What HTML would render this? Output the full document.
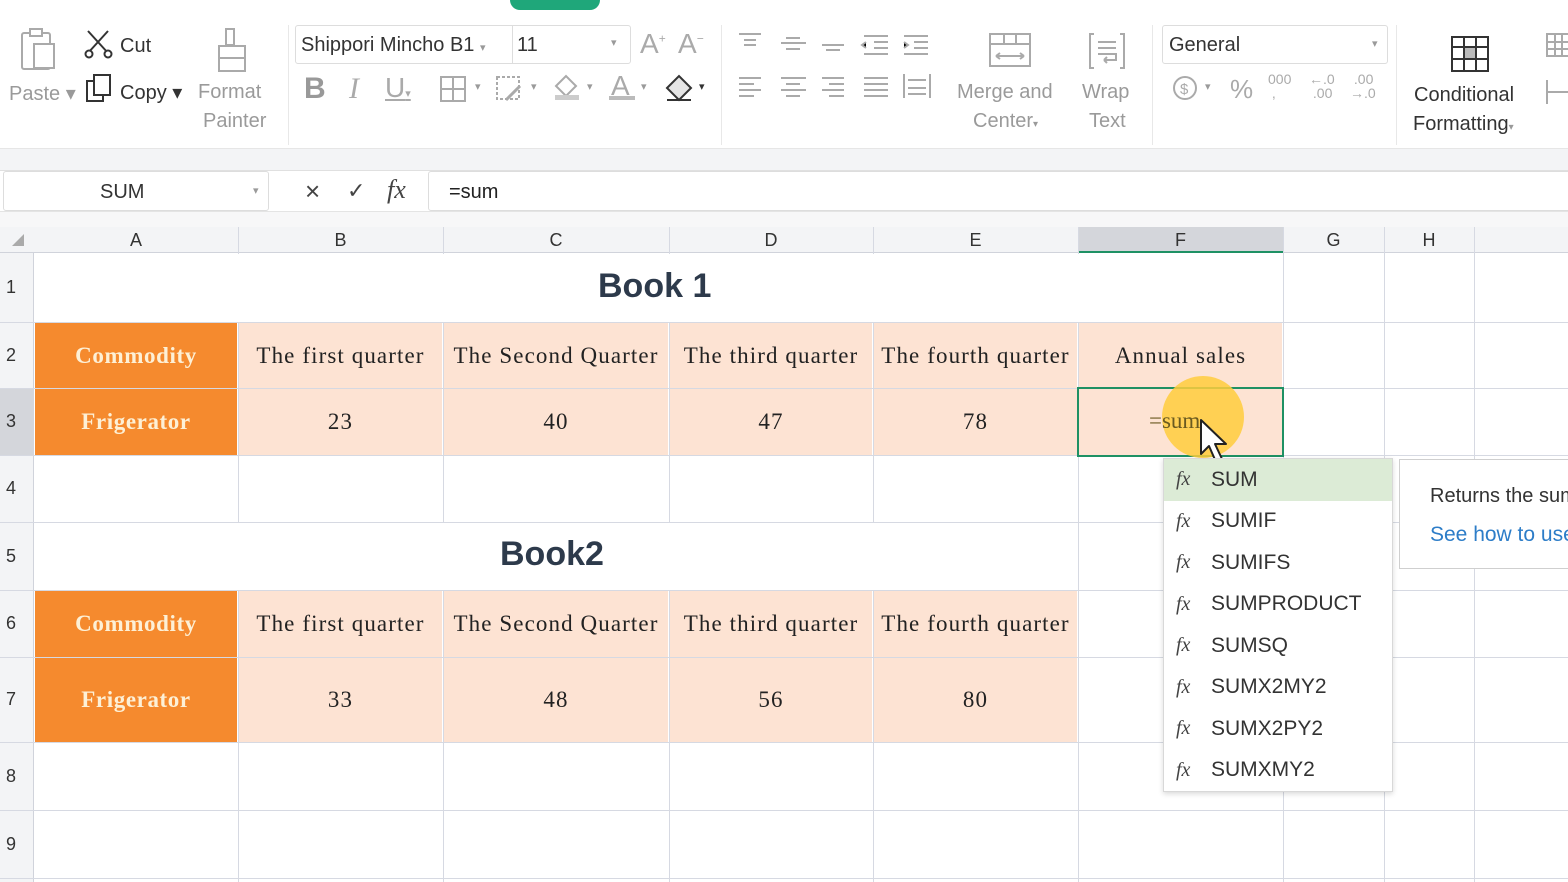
<!DOCTYPE html>
<html><head><meta charset="utf-8"><style>
*{margin:0;padding:0;box-sizing:border-box}
body{width:1568px;height:882px;overflow:hidden;background:#fff;font-family:"Liberation Sans",sans-serif;position:relative;color:#333}
.a{position:absolute}
.t{position:absolute;white-space:nowrap;color:#9a9a9a;font-size:20px}
.ser{font-family:"Liberation Serif",serif}
.cell{position:absolute;display:flex;align-items:center;justify-content:center;font-family:"Liberation Serif",serif;font-size:23px;letter-spacing:1.1px;color:#222;white-space:nowrap}
.or{background:#f58a2e;color:#fdf0d6;font-weight:bold;letter-spacing:0.6px}
.pe{background:#fde3d3}
.vl{position:absolute;width:1px;background:#d6d9e2}
.hl{position:absolute;height:1px;background:#d6d9e2}
.ch{position:absolute;top:227px;height:26px;font-size:18px;color:#333;display:flex;align-items:center;justify-content:center}
.rh{position:absolute;left:0;width:34px;font-size:18px;color:#333;padding-left:6px;display:flex;align-items:center}
.dd{position:absolute;left:1164px;width:228px;height:41.5px;display:flex;align-items:center;font-size:21px;color:#333}
.dd i{font-family:"Liberation Serif",serif;font-style:italic;font-size:20px;width:47px;padding-left:12px;color:#444}
</style></head><body>
<div class="a" style="left:510px;top:-12px;width:90px;height:22px;background:#1fa77a;border-radius:10px"></div>
<!-- ribbon -->
<div class="a" style="left:0;top:148px;width:1568px;height:22px;background:#f3f4f6;border-top:1px solid #e6e6e6"></div>
<svg class="a" style="left:20px;top:28px" width="44" height="44"><rect x="2" y="5" width="28" height="36" rx="2" fill="none" stroke="#aaa" stroke-width="2"/><rect x="10" y="1" width="12" height="7" fill="#fff" stroke="#aaa" stroke-width="2"/><rect x="14" y="16" width="20" height="24" fill="#fff" stroke="#aaa" stroke-width="2"/></svg>
<div class="t" style="left:9px;top:81px">Paste ▾</div>
<svg class="a" style="left:84px;top:29px" width="32" height="30"><path d="M4 2 L24 24 M24 2 L4 24" stroke="#333" stroke-width="2"/><circle cx="5" cy="25" r="3.5" fill="#fff" stroke="#333" stroke-width="2"/><circle cx="24" cy="25" r="3.5" fill="#fff" stroke="#333" stroke-width="2"/></svg>
<div class="t" style="left:120px;top:35px;color:#333">Cut</div>
<svg class="a" style="left:86px;top:74px" width="28" height="30"><rect x="1" y="7" width="16" height="20" fill="#fff" stroke="#333" stroke-width="2"/><rect x="8" y="1" width="16" height="20" fill="#fff" stroke="#333" stroke-width="2"/></svg>
<div class="t" style="left:120px;top:80px;color:#333">Copy ▾</div>
<svg class="a" style="left:215px;top:28px" width="36" height="46"><rect x="11" y="1" width="8" height="16" fill="none" stroke="#aaa" stroke-width="2"/><path d="M4 18 H30 V43 H4Z M4 30 H30" fill="none" stroke="#aaa" stroke-width="2"/></svg>
<div class="t" style="left:198px;top:81px">Format</div>
<div class="t" style="left:203px;top:110px">Painter</div>
<div class="a" style="left:288px;top:25px;width:1px;height:120px;background:#e8e8e8"></div>
<div class="a" style="left:295px;top:25px;width:336px;height:39px;border:1px solid #ddd;border-radius:3px"></div>
<div class="a" style="left:512px;top:25px;width:1px;height:39px;background:#ddd"></div>
<div class="t" style="left:301px;top:34px;color:#333">Shippori Mincho B1 <span style="font-size:11px;color:#999">▾</span></div>
<div class="t" style="left:517px;top:34px;color:#333">11</div>
<div class="t" style="left:611px;top:36px;font-size:11px">▾</div>
<div class="t" style="left:640px;top:28px;font-size:28px;color:#aaa">A<sup style="font-size:12px">+</sup></div>
<div class="t" style="left:678px;top:28px;font-size:28px;color:#aaa">A<sup style="font-size:12px">−</sup></div>
<div class="t" style="left:304px;top:72px;font-size:30px;font-weight:bold;color:#999">B</div>
<div class="t ser" style="left:349px;top:72px;font-size:30px;font-style:italic;color:#aaa">I</div>
<div class="t" style="left:385px;top:72px;font-size:28px;text-decoration:underline;color:#aaa">U<span style="font-size:11px">▾</span></div>
<svg class="a" style="left:440px;top:76px" width="30" height="26"><rect x="1" y="1" width="24" height="24" fill="none" stroke="#aaa" stroke-width="2"/><path d="M13 1V25M1 13H25" stroke="#aaa" stroke-width="2"/></svg>
<div class="t" style="left:475px;top:80px;font-size:11px">▾</div>
<svg class="a" style="left:496px;top:76px" width="30" height="26"><rect x="1" y="1" width="22" height="22" fill="none" stroke="#aaa" stroke-width="2" stroke-dasharray="3 2"/><path d="M10 24L24 10" stroke="#aaa" stroke-width="3"/></svg>
<div class="t" style="left:531px;top:80px;font-size:11px">▾</div>
<svg class="a" style="left:552px;top:72px" width="30" height="30"><path d="M4 14L14 4L24 14L14 24Z" fill="none" stroke="#aaa" stroke-width="2"/><rect x="3" y="23" width="24" height="5" fill="#ccc"/></svg>
<div class="t" style="left:587px;top:80px;font-size:11px">▾</div>
<div class="t" style="left:611px;top:70px;font-size:28px;color:#aaa">A</div>
<div class="a" style="left:609px;top:96px;width:26px;height:4px;background:#bbb"></div>
<div class="t" style="left:641px;top:80px;font-size:11px">▾</div>
<svg class="a" style="left:663px;top:72px" width="34" height="30"><path d="M4 16L16 4L28 16L16 28Z" fill="#e5e5e5" stroke="#333" stroke-width="2"/><path d="M4 28H28" stroke="#333" stroke-width="2"/></svg>
<div class="t" style="left:699px;top:80px;font-size:11px;color:#333">▾</div>
<div class="a" style="left:721px;top:25px;width:1px;height:120px;background:#e8e8e8"></div>
<svg class="a" style="left:736px;top:28px" width="200" height="80" stroke="#aaa" stroke-width="2"><path d="M3 6H25M8 12H20M8 17H20"/><path d="M45 15H70M50 10H64M50 21H64"/><path d="M86 17H108M90 22H104"/><path d="M128 8H152M138 14H152M138 20H152M128 26H152M130 14L126 17L130 20"/><path d="M168 8H192M178 14H192M178 20H192M168 26H192M168 14L172 17L168 20"/>
<path d="M3 50H25M3 56H18M3 62H25M3 68H18"/><path d="M45 50H70M50 56H64M45 62H70M50 68H64"/><path d="M86 50H108M93 56H108M86 62H108M93 68H108"/><path d="M128 50H152M128 56H152M128 62H152M128 68H152"/><path d="M168 46V70M194 46V70M172 52H190M172 60H190M172 66H190"/></svg>
<svg class="a" style="left:988px;top:32px" width="46" height="36"><rect x="2" y="2" width="40" height="32" fill="none" stroke="#aaa" stroke-width="2"/><path d="M2 12H42M16 2V12M28 2V12M8 24H36M8 24l4-3M8 24l4 3M36 24l-4-3M36 24l-4 3" stroke="#aaa" stroke-width="2" fill="none"/></svg>
<div class="t" style="left:957px;top:81px">Merge and</div>
<div class="t" style="left:973px;top:110px">Center<span style="font-size:10px">▾</span></div>
<svg class="a" style="left:1088px;top:32px" width="40" height="38" stroke="#aaa" stroke-width="2" fill="none"><path d="M6 2H2V36H6M32 2H36V36H32M10 10H28M10 16H28M10 22H28V28H16M16 28l3-3M16 28l3 3"/></svg>
<div class="t" style="left:1082px;top:81px">Wrap</div>
<div class="t" style="left:1089px;top:110px">Text</div>
<div class="a" style="left:1152px;top:25px;width:1px;height:120px;background:#e8e8e8"></div>
<div class="a" style="left:1162px;top:25px;width:226px;height:39px;border:1px solid #ddd;border-radius:3px"></div>
<div class="t" style="left:1169px;top:34px;color:#333">General</div>
<div class="t" style="left:1372px;top:37px;font-size:11px">▾</div>
<svg class="a" style="left:1172px;top:74px" width="28" height="28"><circle cx="13" cy="14" r="11" fill="none" stroke="#aaa" stroke-width="2"/><text x="8" y="20" font-size="15" fill="#aaa" font-family="Liberation Sans">$</text></svg>
<div class="t" style="left:1205px;top:80px;font-size:11px">▾</div>
<div class="t" style="left:1230px;top:74px;font-size:26px;color:#aaa">%</div>
<div class="t" style="left:1268px;top:72px;font-size:14px;line-height:14px;color:#aaa">000<br>&nbsp;,</div>
<div class="t" style="left:1309px;top:72px;font-size:14px;line-height:14px;color:#aaa">←.0<br>&nbsp;.00</div>
<div class="t" style="left:1350px;top:72px;font-size:14px;line-height:14px;color:#aaa">&nbsp;.00<br>→.0</div>
<div class="a" style="left:1396px;top:25px;width:1px;height:120px;background:#e8e8e8"></div>
<svg class="a" style="left:1450px;top:35px" width="42" height="38"><rect x="2" y="2" width="36" height="34" fill="none" stroke="#333" stroke-width="2"/><path d="M2 12H38M2 24H38M14 2V36M26 2V36" stroke="#333" stroke-width="2"/><rect x="15" y="13" width="10" height="10" fill="#bbb"/></svg>
<div class="t" style="left:1414px;top:84px;color:#333">Conditional</div>
<div class="t" style="left:1413px;top:113px;color:#333">Formatting<span style="font-size:10px;color:#999">▾</span></div>
<svg class="a" style="left:1545px;top:32px" width="23" height="80" stroke="#aaa" stroke-width="2" fill="none"><rect x="2" y="2" width="22" height="22"/><path d="M2 10H24M2 17H24M10 2V24M17 2V24"/><path d="M2 48V72M2 60H24"/></svg>
<!-- formula bar -->
<div class="a" style="left:0;top:170px;width:1568px;height:1px;background:#e0e0e0"></div>
<div class="a" style="left:3px;top:171px;width:266px;height:40px;border:1px solid #ddd;border-radius:3px;background:#fff"></div>
<div class="t" style="left:100px;top:181px;color:#333">SUM</div>
<div class="t" style="left:253px;top:184px;font-size:11px">▾</div>
<div class="t" style="left:305px;top:176px;font-size:26px;color:#444">×</div>
<div class="t" style="left:347px;top:178px;font-size:22px;color:#444">✓</div>
<div class="t ser" style="left:387px;top:175px;font-size:26px;font-style:italic;color:#444">fx</div>
<div class="a" style="left:428px;top:171px;width:1150px;height:40px;border:1px solid #ddd;border-radius:3px;background:#fff"></div>
<div class="t" style="left:449px;top:181px;color:#222">=sum</div>
<div class="a" style="left:0;top:211px;width:1568px;height:16px;background:#f7f7f8;border-top:1px solid #e4e4e4"></div>
<!-- column headers -->
<div class="a" style="left:0;top:227px;width:1568px;height:26px;background:#f3f4f6;border-bottom:1px solid #d0d3db"></div>
<div class="a" style="left:1078px;top:227px;width:205px;height:26px;background:#d4d6db;border-bottom:2px solid #1e9164"></div>
<div class="a" style="left:12px;top:234px;width:0;height:0;border-left:12px solid transparent;border-bottom:12px solid #aaa"></div>
<div class="ch" style="left:34px;width:204px">A</div><div class="ch" style="left:238px;width:205px">B</div><div class="ch" style="left:443px;width:226px">C</div><div class="ch" style="left:669px;width:204px">D</div><div class="ch" style="left:873px;width:205px">E</div><div class="ch" style="left:1078px;width:205px">F</div><div class="ch" style="left:1283px;width:101px">G</div><div class="ch" style="left:1384px;width:90px">H</div>
<div class="a" style="left:0;top:253px;width:34px;height:629px;background:#f3f4f6;border-right:1px solid #d0d3db"></div>
<div class="a" style="left:0;top:388px;width:34px;height:67px;background:#d4d6db"></div>
<!-- grid lines -->
<div class="vl" style="left:238px;top:227px;height:655px"></div><div class="vl" style="left:443px;top:227px;height:655px"></div><div class="vl" style="left:669px;top:227px;height:655px"></div><div class="vl" style="left:873px;top:227px;height:655px"></div><div class="vl" style="left:1078px;top:227px;height:655px"></div><div class="vl" style="left:1283px;top:227px;height:655px"></div><div class="vl" style="left:1384px;top:227px;height:655px"></div><div class="vl" style="left:1474px;top:227px;height:655px"></div>
<div class="hl" style="left:0;top:322px;width:1568px"></div><div class="hl" style="left:0;top:388px;width:1568px"></div><div class="hl" style="left:0;top:455px;width:1568px"></div><div class="hl" style="left:0;top:522px;width:1568px"></div><div class="hl" style="left:0;top:590px;width:1568px"></div><div class="hl" style="left:0;top:657px;width:1568px"></div><div class="hl" style="left:0;top:742px;width:1568px"></div><div class="hl" style="left:0;top:810px;width:1568px"></div><div class="hl" style="left:0;top:878px;width:1568px"></div>
<div class="a" style="left:35px;top:254px;width:1247px;height:68px;background:#fff"></div>
<div class="t" style="left:598px;top:267px;font-size:34px;font-weight:bold;color:#2d3a4b">Book 1</div>
<div class="a" style="left:35px;top:523px;width:1042px;height:67px;background:#fff"></div>
<div class="t" style="left:500px;top:535px;font-size:34px;font-weight:bold;color:#2d3a4b">Book2</div>
<div class="rh" style="top:253px;height:69px">1</div><div class="rh" style="top:322px;height:66px">2</div><div class="rh" style="top:388px;height:67px">3</div><div class="rh" style="top:455px;height:67px">4</div><div class="rh" style="top:522px;height:68px">5</div><div class="rh" style="top:590px;height:67px">6</div><div class="rh" style="top:657px;height:85px">7</div><div class="rh" style="top:742px;height:68px">8</div><div class="rh" style="top:810px;height:68px">9</div>
<!-- table 1 -->
<div class="cell or" style="left:35px;top:323px;width:202px;height:65px">Commodity</div>
<div class="cell pe" style="left:239px;top:323px;width:203px;height:65px">The first quarter</div>
<div class="cell pe" style="left:444px;top:323px;width:224px;height:65px">The Second Quarter</div>
<div class="cell pe" style="left:670px;top:323px;width:202px;height:65px">The third quarter</div>
<div class="cell pe" style="left:874px;top:323px;width:203px;height:65px">The fourth quarter</div>
<div class="cell pe" style="left:1079px;top:323px;width:203px;height:65px">Annual sales</div>
<div class="cell or" style="left:35px;top:389px;width:202px;height:66px">Frigerator</div>
<div class="cell pe" style="left:239px;top:389px;width:203px;height:66px">23</div>
<div class="cell pe" style="left:444px;top:389px;width:224px;height:66px">40</div>
<div class="cell pe" style="left:670px;top:389px;width:202px;height:66px">47</div>
<div class="cell pe" style="left:874px;top:389px;width:203px;height:66px">78</div>
<div class="cell pe" style="left:1077px;top:387px;width:207px;height:70px;border:2px solid #1e9164"></div>
<div class="a" style="left:1162px;top:376px;width:82px;height:82px;border-radius:50%;background:rgba(255,205,60,0.85)"></div>
<div class="t ser" style="left:1149px;top:408px;font-size:23px;color:#6a5a20">=sum</div>
<svg class="a" style="left:1198px;top:418px" width="34" height="52"><path d="M3 2V36L11 28L18 44L24 41L17 26H28Z" fill="#fff" stroke="#222" stroke-width="2" stroke-linejoin="round"/></svg>
<!-- table 2 -->
<div class="cell or" style="left:35px;top:591px;width:202px;height:66px">Commodity</div>
<div class="cell pe" style="left:239px;top:591px;width:203px;height:66px">The first quarter</div>
<div class="cell pe" style="left:444px;top:591px;width:224px;height:66px">The Second Quarter</div>
<div class="cell pe" style="left:670px;top:591px;width:202px;height:66px">The third quarter</div>
<div class="cell pe" style="left:874px;top:591px;width:203px;height:66px">The fourth quarter</div>
<div class="cell or" style="left:35px;top:658px;width:202px;height:84px">Frigerator</div>
<div class="cell pe" style="left:239px;top:658px;width:203px;height:84px">33</div>
<div class="cell pe" style="left:444px;top:658px;width:224px;height:84px">48</div>
<div class="cell pe" style="left:670px;top:658px;width:202px;height:84px">56</div>
<div class="cell pe" style="left:874px;top:658px;width:203px;height:84px">80</div>
<!-- dropdown -->
<div class="a" style="left:1163px;top:458px;width:230px;height:334px;background:#fff;border:1px solid #d8d8d8;box-shadow:0 2px 5px rgba(0,0,0,.15)"></div>
<div class="dd" style="top:459px;background:#dcebd6"><i>fx</i>SUM</div>
<div class="dd" style="top:500.5px"><i>fx</i>SUMIF</div>
<div class="dd" style="top:542px"><i>fx</i>SUMIFS</div>
<div class="dd" style="top:583.5px"><i>fx</i>SUMPRODUCT</div>
<div class="dd" style="top:625px"><i>fx</i>SUMSQ</div>
<div class="dd" style="top:666.5px"><i>fx</i>SUMX2MY2</div>
<div class="dd" style="top:708px"><i>fx</i>SUMX2PY2</div>
<div class="dd" style="top:749.5px"><i>fx</i>SUMXMY2</div>
<div class="a" style="left:1399px;top:459px;width:180px;height:110px;background:#fff;border:1px solid #cfcfcf"></div>
<div class="t" style="left:1430px;top:485px;color:#333">Returns the sum</div>
<div class="t" style="left:1430px;top:523px;color:#2d7dc8;font-size:21px">See how to use</div>
</body></html>
